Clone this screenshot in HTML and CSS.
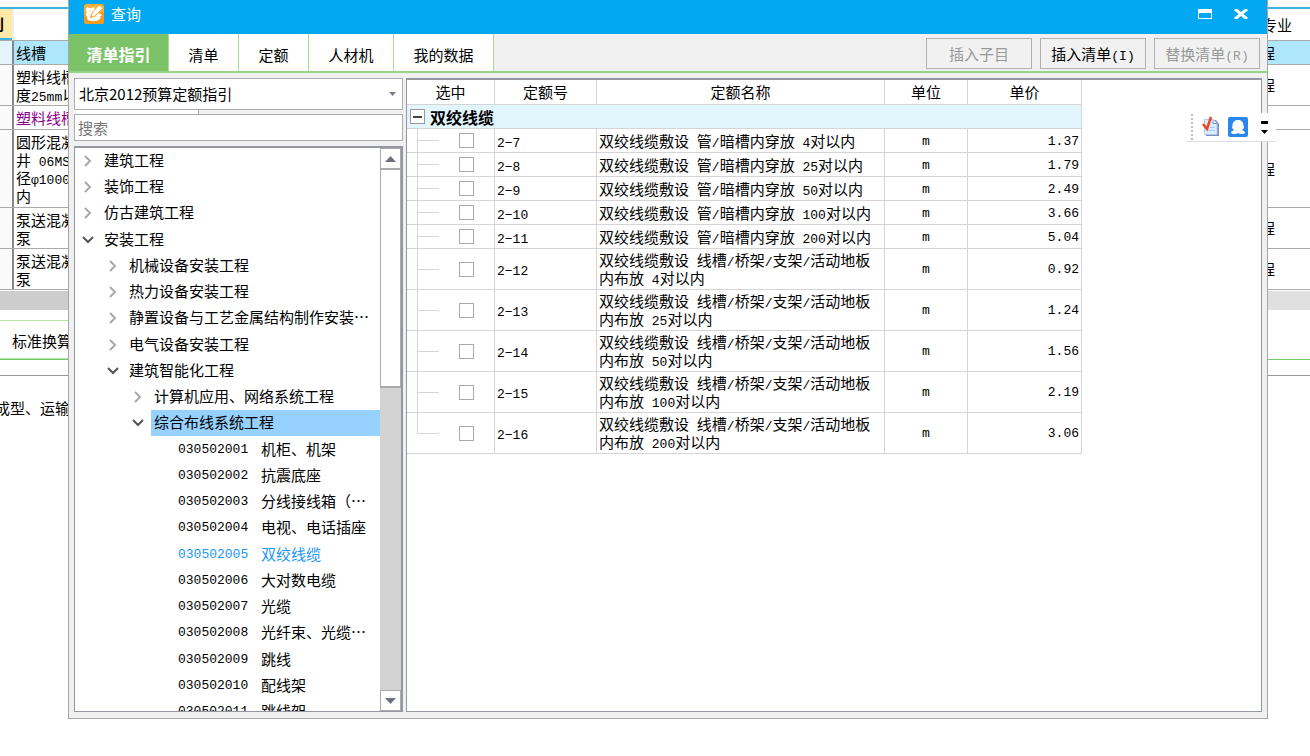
FILE: index.html
```html
<!DOCTYPE html>
<html lang="zh-CN">
<head>
<meta charset="utf-8">
<title>查询</title>
<link rel="stylesheet" href="styles.css">
</head>
<body>
<main class="app">
  <div class="sheet">
    <div class="line head"><div class="kind"><b>类别</b></div><div class="name"></div><div class="major">专业</div></div>
    <div class="line h24 current"><div class="kind"></div><div class="name">线槽</div><div class="major">程</div></div>
    <div class="line h41"><div class="kind"></div><div class="name">塑料线槽<br>度<span class="n">25mm</span>以内</div><div class="major">程</div></div>
    <div class="line h24"><div class="kind"></div><div class="name purple">塑料线槽</div><div class="major"></div></div>
    <div class="line h77"><div class="kind"></div><div class="name">圆形混凝土<br>井<span class="n"> 06MS</span><br>径<span class="n">φ1000</span><br>内</div><div class="major">程</div></div>
    <div class="line h41"><div class="kind"></div><div class="name">泵送混凝土<br>泵</div><div class="major">程</div></div>
    <div class="line h41"><div class="kind"></div><div class="name">泵送混凝土<br>泵</div><div class="major">程</div></div>
  </div>
  <div class="sheet-scroll"></div>
  <div class="subtabs">标准换算</div>
  <div class="subbar"></div>
  <div class="note"><span>成型、运输</span></div>
</main>

<section class="dialog" role="dialog" aria-labelledby="dlg-title">
  <header class="titlebar">
    <svg class="logo" viewBox="0 0 20 20" aria-hidden="true">
      <rect width="20" height="20" rx="3" fill="#fbb034"/>
      <path d="M0 11 L20 8 V17 Q20 20 17 20 H3 Q0 20 0 17Z" fill="#f7981f"/>
      <path d="M3 3 Q6 5 10 3 L11 6 L7 10 L6 14 L10 13 L15 9 L18 11 Q16 12 16 15 Q13 18 7 17 Q3 17 3 13 Q1 11 3 9 Q1 6 3 3Z" fill="#fff"/>
      <path d="M15 1 L19 4 L11 12 L7 13 L8 9Z" fill="#fff" stroke="#fbb034" stroke-width="1"/>
    </svg>
    <h1 id="dlg-title">查询</h1>
    <button class="winbtn" aria-label="最大化"><svg width="14" height="10" viewBox="0 0 14 10"><path d="M0 0H14V10H0ZM1 4V9H13V4Z" fill="#fff" fill-rule="evenodd"/></svg></button>
    <button class="winbtn" aria-label="关闭"><svg width="14" height="10" viewBox="0 0 14 10"><path d="M1 0L13 10M13 0L1 10" fill="none" stroke="#fff" stroke-width="3"/></svg></button>
  </header>
  <nav class="toolbar">
    <button class="tab w100 active">清单指引</button>
    <button class="tab w70">清单</button>
    <button class="tab w70">定额</button>
    <button class="tab w85">人材机</button>
    <button class="tab w100">我的数据</button>
    <div class="actions">
      <button class="act" disabled>插入子目</button>
      <button class="act">插入清单<span class="n">(I)</span></button>
      <button class="act" disabled>替换清单<span class="n">(R)</span></button>
    </div>
  </nav>
  <div class="body">
    <aside class="side">
      <div class="combo">
        <select aria-label="定额指引"><option>北京2012预算定额指引</option></select>
        <svg width="7" height="4" viewBox="0 0 7 4" aria-hidden="true"><path d="M0 0H7L3.500 4Z" fill="#777d8c"/></svg>
      </div>
      <div class="splitter"></div>
      <input class="search" type="text" placeholder="搜索" aria-label="搜索">
      <div class="treebox">
        <ul class="tree">
          <li class="l1"><svg class="ar"><use href="#right"/></svg><span>建筑工程</span></li>
          <li class="l1"><svg class="ar"><use href="#right"/></svg><span>装饰工程</span></li>
          <li class="l1"><svg class="ar"><use href="#right"/></svg><span>仿古建筑工程</span></li>
          <li class="l1"><svg class="ar"><use href="#down"/></svg><span>安装工程</span></li>
          <li class="l2"><svg class="ar"><use href="#right"/></svg><span>机械设备安装工程</span></li>
          <li class="l2"><svg class="ar"><use href="#right"/></svg><span>热力设备安装工程</span></li>
          <li class="l2"><svg class="ar"><use href="#right"/></svg><span>静置设备与工艺金属结构制作安装⋯</span></li>
          <li class="l2"><svg class="ar"><use href="#right"/></svg><span>电气设备安装工程</span></li>
          <li class="l2"><svg class="ar"><use href="#down"/></svg><span>建筑智能化工程</span></li>
          <li class="l3"><svg class="ar"><use href="#right"/></svg><span>计算机应用、网络系统工程</span></li>
          <li class="l3 selected"><svg class="ar"><use href="#down"/></svg><span>综合布线系统工程</span></li>
          <li class="leaf"><span class="code">030502001</span><span>机柜、机架</span></li>
          <li class="leaf"><span class="code">030502002</span><span>抗震底座</span></li>
          <li class="leaf"><span class="code">030502003</span><span>分线接线箱（⋯</span></li>
          <li class="leaf"><span class="code">030502004</span><span>电视、电话插座</span></li>
          <li class="leaf on"><span class="code">030502005</span><span>双绞线缆</span></li>
          <li class="leaf"><span class="code">030502006</span><span>大对数电缆</span></li>
          <li class="leaf"><span class="code">030502007</span><span>光缆</span></li>
          <li class="leaf"><span class="code">030502008</span><span>光纤束、光缆⋯</span></li>
          <li class="leaf"><span class="code">030502009</span><span>跳线</span></li>
          <li class="leaf"><span class="code">030502010</span><span>配线架</span></li>
          <li class="leaf"><span class="code">030502011</span><span>跳线架</span></li>
        </ul>
        <div class="scroll">
          <button aria-label="向上"><svg width="11" height="6" viewBox="0 0 11 6"><path d="M0 6H11L5.500 0Z" fill="#6d7081"/></svg></button>
          <div class="thumb"></div>
          <button class="end" aria-label="向下"><svg width="11" height="6" viewBox="0 0 11 6"><path d="M0 0H11L5.500 6Z" fill="#6d7081"/></svg></button>
        </div>
      </div>
    </aside>
    <div class="content">
      <table class="grid">
        <colgroup><col class="c1"><col class="c2"><col class="c3"><col class="c4"><col class="c5"></colgroup>
        <thead><tr><th>选中</th><th>定额号</th><th>定额名称</th><th>单位</th><th>单价</th></tr></thead>
        <tbody>
          <tr class="group"><td colspan="5"><div><button class="minus" aria-label="折叠"><svg width="9" height="2" viewBox="0 0 9 2"><path d="M0 1H9" stroke="#444" stroke-width="2"/></svg></button><b>双绞线缆</b></div></td></tr>
          <tr><td class="pick"><input type="checkbox" aria-label="2-7"></td><td><span class="n">2−7</span></td><td>双绞线缆敷设<span class="n"> </span>管<span class="n">/</span>暗槽内穿放<span class="n"> 4</span>对以内</td><td class="unit">m</td><td class="price">1.37</td></tr>
          <tr><td class="pick"><input type="checkbox" aria-label="2-8"></td><td><span class="n">2−8</span></td><td>双绞线缆敷设<span class="n"> </span>管<span class="n">/</span>暗槽内穿放<span class="n"> 25</span>对以内</td><td class="unit">m</td><td class="price">1.79</td></tr>
          <tr><td class="pick"><input type="checkbox" aria-label="2-9"></td><td><span class="n">2−9</span></td><td>双绞线缆敷设<span class="n"> </span>管<span class="n">/</span>暗槽内穿放<span class="n"> 50</span>对以内</td><td class="unit">m</td><td class="price">2.49</td></tr>
          <tr><td class="pick"><input type="checkbox" aria-label="2-10"></td><td><span class="n">2−10</span></td><td>双绞线缆敷设<span class="n"> </span>管<span class="n">/</span>暗槽内穿放<span class="n"> 100</span>对以内</td><td class="unit">m</td><td class="price">3.66</td></tr>
          <tr><td class="pick"><input type="checkbox" aria-label="2-11"></td><td><span class="n">2−11</span></td><td>双绞线缆敷设<span class="n"> </span>管<span class="n">/</span>暗槽内穿放<span class="n"> 200</span>对以内</td><td class="unit">m</td><td class="price">5.04</td></tr>
          <tr class="tall"><td class="pick"><input type="checkbox" aria-label="2-12"></td><td><span class="n">2−12</span></td><td>双绞线缆敷设<span class="n"> </span>线槽<span class="n">/</span>桥架<span class="n">/</span>支架<span class="n">/</span>活动地板<br>内布放<span class="n"> 4</span>对以内</td><td class="unit">m</td><td class="price">0.92</td></tr>
          <tr class="tall"><td class="pick"><input type="checkbox" aria-label="2-13"></td><td><span class="n">2−13</span></td><td>双绞线缆敷设<span class="n"> </span>线槽<span class="n">/</span>桥架<span class="n">/</span>支架<span class="n">/</span>活动地板<br>内布放<span class="n"> 25</span>对以内</td><td class="unit">m</td><td class="price">1.24</td></tr>
          <tr class="tall"><td class="pick"><input type="checkbox" aria-label="2-14"></td><td><span class="n">2−14</span></td><td>双绞线缆敷设<span class="n"> </span>线槽<span class="n">/</span>桥架<span class="n">/</span>支架<span class="n">/</span>活动地板<br>内布放<span class="n"> 50</span>对以内</td><td class="unit">m</td><td class="price">1.56</td></tr>
          <tr class="tall"><td class="pick"><input type="checkbox" aria-label="2-15"></td><td><span class="n">2−15</span></td><td>双绞线缆敷设<span class="n"> </span>线槽<span class="n">/</span>桥架<span class="n">/</span>支架<span class="n">/</span>活动地板<br>内布放<span class="n"> 100</span>对以内</td><td class="unit">m</td><td class="price">2.19</td></tr>
          <tr class="tall"><td class="pick last"><input type="checkbox" aria-label="2-16"></td><td><span class="n">2−16</span></td><td>双绞线缆敷设<span class="n"> </span>线槽<span class="n">/</span>桥架<span class="n">/</span>支架<span class="n">/</span>活动地板<br>内布放<span class="n"> 200</span>对以内</td><td class="unit">m</td><td class="price">3.06</td></tr>
        </tbody>
      </table>
    </div>
  </div>
</section>

<div class="floatbar">
  <span class="grip"></span>
  <button aria-label="检查"><svg width="18" height="22" viewBox="0 0 18 22">
    <path d="M4 4H14L17 8V20H4Z" fill="#7f8cbb"/>
    <path d="M2.500 3.500H11L15 7.500V18.500H2.500Z" fill="#dcecfc" stroke="#a9c9ee"/>
    <path d="M11 3.500V7.500H15" fill="#fff" stroke="#5f92d8"/>
    <path d="M8 11.500H13M6 14.500H13" stroke="#a5caf3"/>
    <path d="M1 8L5 13L9 1" fill="none" stroke="#f0431c" stroke-width="2.500"/>
  </svg></button>
  <button aria-label="用户"><svg width="20" height="20" viewBox="0 0 20 20">
    <rect width="20" height="20" rx="2" fill="#2a86ec"/>
    <path d="M10 3C14 3 15.500 5.500 15.500 8.500L16 11L14 13C15.500 14 17 14.500 17 16L15 17H12L10 16L8 17H5L3 16C3 14.500 4.500 14 6 13L4 11L4.500 8.500C4.500 5.500 6 3 10 3Z" fill="#fff"/>
  </svg></button>
  <button class="more" aria-label="更多"><svg width="7" height="14" viewBox="0 0 7 14"><path d="M0 1H7V4H0ZM0 10H7L3.500 14Z" fill="#000"/></svg></button>
</div>

<svg class="defs" aria-hidden="true">
  <symbol id="right" viewBox="0 0 12 12"><path d="M3 1L8 6L3 11" fill="none" stroke="#a9a9a9" stroke-width="2"/></symbol>
  <symbol id="down" viewBox="0 0 12 12"><path d="M1 3L6 8L11 3" fill="none" stroke="#555" stroke-width="2"/></symbol>
</svg>
</body>
</html>
```

FILE: styles.css
```css
* { box-sizing: border-box; }
body {
  margin: 0;
  min-height: 100vh;
  position: relative;
  overflow: hidden;
  background: #fff;
  color: #000;
  font: 15px/18px "Noto Sans CJK SC", sans-serif;
}
button, input, select { font: inherit; color: inherit; }
button { padding: 0; border: 0; background: none; }
.n, .code, .unit, .price {
  font-family: "Liberation Mono", "Noto Sans CJK SC", monospace;
  font-size: 13px;
  white-space: pre;
}
.n { line-height: 0; }
.defs { display: none; }

/* main window behind the dialog */
.app { padding-top: 7px; }
.sheet { border-top: 2px solid #3ab3e2; }
.line {
  display: grid;
  grid-template-columns: 12px 1fr 50px;
  border-bottom: 1px solid #aaa;
  overflow: hidden;
}
.head { height: 32px; }
.h24 { height: 24px; }
.h41 { height: 41px; }
.h77 { height: 78px; }
.kind { background: #fafafa; }
.name { border-left: 2px solid #888; padding-left: 2px; white-space: nowrap; padding-top: 3px; }
.major { display: flex; align-items: center; }
.head .name { border-left-color: #eee; }
.head .major { padding-left: 2px; }
.head .kind {
  display: flex;
  align-items: center;
  justify-content: flex-end;
  padding-right: 8px;
  background: #ffe9a8;
  border-bottom: 2px solid #3ab3e2;
  white-space: nowrap;
}
.current { background: #aee6fb; }
.current .kind { background: #e2f5fd; }
.purple { color: #8b008b; }
.sheet-scroll { height: 19px; margin-top: 1px; background: linear-gradient(90deg, #cdcdcd 50%, #e0e0e0 50%); }
.subtabs {
  margin-top: 10px;
  height: 39px;
  padding-left: 12px;
  line-height: 40px;
  border: solid #72c866;
  border-width: 1px 0;
  border-image: linear-gradient(90deg, #b9e8a6 50%, #fff 50%) 1;
  box-shadow: 0 1px #72c866;
}
.subbar { height: 17px; border-bottom: 1px solid #999; }
.note { width: 70px; margin-top: 23px; display: flex; justify-content: flex-end; white-space: nowrap; }

/* dialog */
.dialog {
  position: absolute;
  top: 0;
  left: 68px;
  right: 42px;
  display: flex;
  flex-direction: column;
  border: 1px solid #a6a6a6;
  border-top: 0;
  background: #f0f0f0;
}
.titlebar {
  display: flex;
  align-items: center;
  height: 34px;
  padding: 0 19px 6px 15px;
  background: #02a9f2;
  color: #fff;
}
.logo { width: 20px; height: 20px; }
h1 { margin: 0 auto 0 7px; font-size: 15px; font-weight: 400; }
.winbtn { display: flex; margin-left: 22px; }
.toolbar { display: flex; height: 39px; border-bottom: 2px solid #98d487; }
.tab { background: #fff; border-right: 1px solid #a5dd90; padding-top: 4px; }
.tab.active { background: #7bc269; color: #fff; font-size: 16px; font-weight: 700; padding-top: 2px; }
.w70 { width: 70px; }
.w85 { width: 85px; }
.w100 { width: 100px; }
.actions { display: flex; gap: 8px; margin-left: auto; padding: 4px 7px 2px 0; }
.act { width: 106px; border: 1px solid #b0b0b0; background: #f1f1f1; }
.act:disabled { color: #999; }

.body { display: grid; grid-template-columns: 329px 1fr; gap: 3px; height: 645px; padding: 5px 5px 6px; }
.side { display: flex; flex-direction: column; min-height: 0; }
.combo { display: grid; align-items: center; height: 32px; border: 1px solid #abadb3; background: #fff; flex: none; }
.combo > * { grid-area: 1 / 1; }
.combo select { width: 100%; height: 30px; padding: 0 4px; border: 0; appearance: none; background: none; }
.combo svg { justify-self: end; margin-right: 6px; }
.splitter { flex: none; width: 125px; height: 4px; border-right: 1px solid #abadb3; background: #fff; }
.search { flex: none; height: 27px; padding: 0 3px; border: 1px solid #abadb3; background: #fff; }
.search::placeholder { color: #777; opacity: 1; }
.treebox {
  flex: 1;
  min-height: 0;
  margin-top: 5px;
  display: grid;
  grid-template-columns: 1fr 21px;
  border: 2px solid #9499a1;
  border-left-width: 1px;
  border-bottom-width: 1px;
  background: #fff;
  overflow: hidden;
}
.tree {
  display: grid;
  grid-auto-rows: 26px 26px 26px 27px;
  min-height: 0;
  margin: 0;
  padding: 0;
  list-style: none;
  overflow: hidden;
}
.tree li { display: flex; align-items: center; min-width: 0; white-space: nowrap; }
.tree li > span:last-child { flex: 1; padding-left: 3px; line-height: 24px; padding-bottom: 2px; }
.ar { flex: none; width: 12px; height: 12px; margin-right: 7px; }
.l1 { padding-left: 7px; }
.l2 { padding-left: 32px; }
.l3 { padding-left: 57px; }
.leaf { padding-left: 103px; }
.code { flex: none; width: 80px; }
.selected > span { background: #97d1ff; }
.on { color: #1a96f5; }
.scroll { display: flex; flex-direction: column; background: #d3d3d3; min-height: 0; }
.scroll button {
  display: flex;
  flex: none;
  align-items: center;
  justify-content: center;
  height: 21px;
  border: 1px solid #aaa;
  background: #fff;
}
.thumb { height: 219px; border: 1px solid #aaa; border-bottom-width: 2px; background: #fff; }
.scroll .end { margin-top: auto; }

.content { border: 1px solid #9499a1; border-top-width: 2px; background: #fff; min-width: 0; overflow: hidden; }
.grid { table-layout: fixed; width: 675px; border-collapse: separate; border-spacing: 0; }
.c1 { width: 88px; }
.c2 { width: 102px; }
.c3 { width: 288px; }
.c4 { width: 83px; }
.c5 { width: 114px; }
.grid th, .grid td { height: 24px; padding: 0 2px; border: solid #d5d5d5; border-width: 0 1px 1px 0; white-space: nowrap; text-align: left; }
.grid th { height: 25px; font-weight: 400; text-align: center; }
.grid .tall td { height: 41px; }
.group td { background: #e2f6fe; }
.group div { display: flex; align-items: center; gap: 5px; font-size: 16px; }
.minus { display: flex; align-items: center; justify-content: center; width: 15px; height: 15px; margin-left: 1px; border: 1px solid #999; background: #fff; }
.grid .pick {
  padding: 0 0 0 52px;
  line-height: 0;
  background:
    linear-gradient(#d5d5d5, #d5d5d5) 10px 0 / 1px 100% no-repeat,
    linear-gradient(#d5d5d5, #d5d5d5) 10px 50% / 22px 1px no-repeat;
}
.grid .last { background-size: 1px 50%, 22px 1px; }
.pick input { appearance: none; width: 15px; height: 15px; margin: 0; border: 1px solid #aaa; background: #fff; vertical-align: middle; }
.grid .unit, .grid .price { padding-top: 2px; }
.grid .unit { text-align: center; }
.grid .price { text-align: right; }

/* small floating toolbar over the dialog's edge */
.floatbar {
  position: absolute;
  top: 113px;
  right: 34px;
  display: flex;
  align-items: center;
  gap: 8px;
  width: 90px;
  height: 29px;
  padding-left: 5px;
  border-bottom: 1px solid #ddd;
  background: #fff;
}
.floatbar button { display: flex; }
.grip { width: 3px; height: 26px; border-left: 2px dotted #bbb; }
.floatbar .more { margin-left: 5px; }
```
